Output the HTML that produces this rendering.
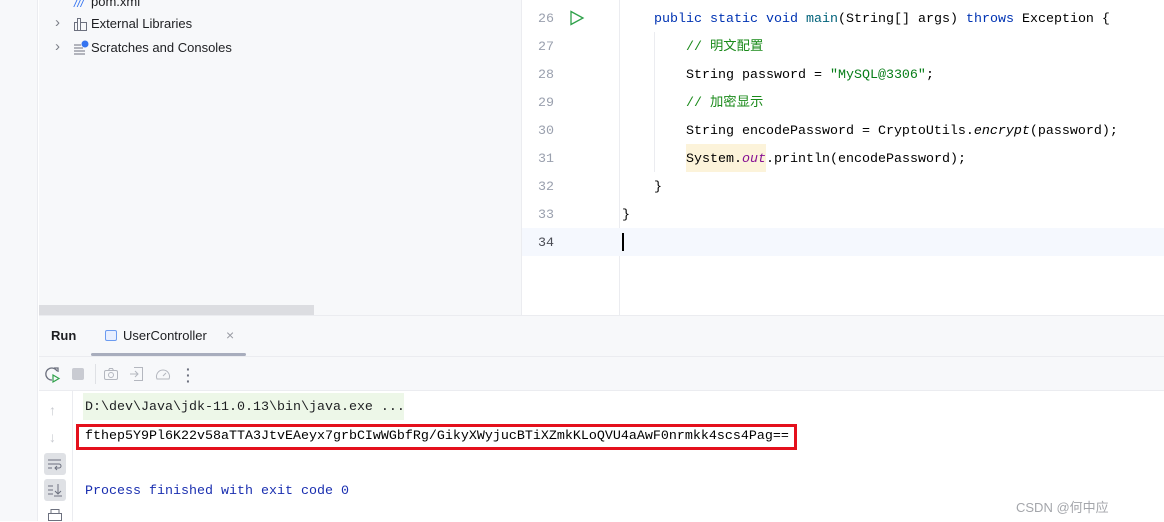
<!DOCTYPE html>
<html><head><meta charset="utf-8"><style>
*{margin:0;padding:0;box-sizing:border-box}
body{width:1164px;height:521px;overflow:hidden;background:#fff;position:relative;font-family:"Liberation Sans","Noto Sans CJK SC",sans-serif}
.a{position:absolute}
.m{font-family:"Liberation Mono","Noto Sans CJK SC",monospace;font-size:13.33px;white-space:pre}
.ln{position:absolute;left:522px;width:32px;text-align:right;color:#9aa0ae;font-family:"Liberation Mono",monospace;font-size:13.33px}
.cl{position:absolute;left:622px;height:28px;line-height:28px}
.kw{color:#0033b3}.fn{color:#00627a}.cm{color:#1a8a1a}.st{color:#067d17}.pu{color:#871094;font-style:italic}
.ui{font-size:13px;color:#1e1f22}
</style></head><body>
<div class="a" style="left:0;top:0;width:38px;height:521px;background:#f7f8fa;border-right:1px solid #ebecf0"></div>
<div class="a" style="left:39px;top:0;width:483px;height:316px;background:#f7f8fa;border-right:1px solid #ebecf0"></div>
<div class="a ui" style="left:91px;top:-6px;">pom.xml</div>
<div class="a" style="left:74px;top:-4px;color:#3574f0;font-size:12px;font-style:italic">///</div>
<div class="a" style="left:55px;top:14px;color:#7c7f88;font-size:15px">›</div>
<div class="a" style="left:55px;top:38px;color:#7c7f88;font-size:15px">›</div>
<svg class="a" style="left:73px;top:16px" width="16" height="16"><path d="M1.5 14.5V6.5h3v8M4.5 14.5V2.5h3v12M7.5 14.5V6.5h6v8zM1 14.5h13" fill="none" stroke="#6c707e"/></svg>
<div class="a ui" style="left:91px;top:16px">External Libraries</div>
<svg class="a" style="left:73px;top:40px" width="16" height="16"><path d="M1 5h7M1 8h9M1 11h11M1 14h11" stroke="#6c707e"/><circle cx="12" cy="4" r="3.5" fill="#3574f0"/></svg>
<div class="a ui" style="left:91px;top:40px">Scratches and Consoles</div>
<div class="a" style="left:39px;top:305px;width:275px;height:10px;background:#dcdde1"></div>
<div class="a" style="left:619px;top:0;width:1px;height:316px;background:#ebecf0"></div>
<div class="a" style="left:522px;top:228px;width:642px;height:28px;background:#f5f8fe"></div>
<div class="a" style="left:654px;top:32px;width:1px;height:140px;background:#ebecf0"></div>
<svg class="a" style="left:569px;top:10px" width="16" height="16"><path d="M2 1.5L14 8 2 14.5Z" fill="none" stroke="#2fa14a" stroke-width="1.3"/></svg>
<div class="ln" style="top:12px">26</div><div class="ln" style="top:40px">27</div><div class="ln" style="top:68px">28</div><div class="ln" style="top:96px">29</div><div class="ln" style="top:124px">30</div><div class="ln" style="top:152px">31</div><div class="ln" style="top:180px">32</div><div class="ln" style="top:208px">33</div><div class="ln" style="top:236px;color:#4b4d55">34</div>
<div class="a" style="left:686px;top:144px;width:80px;height:28px;background:#fcf3da"></div>
<div class="cl m" style="top:6px">    <span class="kw">public static void</span> <span class="fn">main</span>(String[] args) <span class="kw">throws</span> Exception {</div>
<div class="cl m cm" style="top:34px">        // 明文配置</div>
<div class="cl m" style="top:62px">        String password = <span class="st">"MySQL@3306"</span>;</div>
<div class="cl m cm" style="top:90px">        // 加密显示</div>
<div class="cl m" style="top:118px">        String encodePassword = CryptoUtils.<i>encrypt</i>(password);</div>
<div class="cl m" style="top:146px">        System.<span class="pu">out</span>.println(encodePassword);</div>
<div class="cl m" style="top:174px">    }</div>
<div class="cl m" style="top:202px">}</div>
<div class="a" style="left:622px;top:233px;width:2px;height:18px;background:#000"></div>
<div class="a" style="left:39px;top:315px;width:1125px;height:76px;background:#f7f8fa;border-top:1px solid #ebecf0;border-bottom:1px solid #ebecf0"></div>
<div class="a" style="left:39px;top:356px;width:1125px;height:1px;background:#ebecf0"></div>
<div class="a" style="left:51px;top:328px;font-size:13px;font-weight:bold;color:#1e1f22">Run</div>
<div class="a" style="left:105px;top:330px;width:12px;height:11px;border:1px solid #6c9bf0;border-radius:2px;background:#e8efff"></div>
<div class="a ui" style="left:123px;top:328px">UserController</div>
<div class="a" style="left:226px;top:327px;color:#9a9ca4;font-size:14px">×</div>
<div class="a" style="left:91px;top:353px;width:155px;height:3px;background:#a8adbd;border-radius:2px"></div>
<svg class="a" style="left:44px;top:366px" width="18" height="18"><path d="M13 5A6 6 0 1 0 8 14" fill="none" stroke="#6c707e" stroke-width="1.3"/><path d="M10 2h4v4" fill="none" stroke="#6c707e" stroke-width="1.3"/><path d="M9 9l6 3.5-6 3.5z" fill="none" stroke="#2fa14a" stroke-width="1.2"/></svg>
<div class="a" style="left:72px;top:368px;width:12px;height:12px;background:#c9cbd2;border-radius:2px"></div>
<div class="a" style="left:95px;top:364px;width:1px;height:20px;background:#dfe1e5"></div>
<svg class="a" style="left:103px;top:366px" width="16" height="16"><rect x="1.5" y="4.5" width="13" height="9" rx="1.5" fill="none" stroke="#b4b7bf"/><circle cx="8" cy="9" r="2.5" fill="none" stroke="#b4b7bf"/><path d="M5.5 4.5l1-2h3l1 2" fill="none" stroke="#b4b7bf"/></svg>
<svg class="a" style="left:129px;top:366px" width="16" height="16"><path d="M5 1.5h8.5v13H5M1 8h8M6 5l3 3-3 3" fill="none" stroke="#b4b7bf"/></svg>
<svg class="a" style="left:155px;top:366px" width="18" height="16"><path d="M2 13A6.5 6.5 0 1 1 14 13z" fill="none" stroke="#b4b7bf"/><path d="M8 10l3-3" stroke="#b4b7bf"/></svg>
<div class="a" style="left:186px;top:366px;color:#6c707e;font-size:14px;font-weight:bold;line-height:6px">·<br>·<br>·</div>
<div class="a" style="left:72px;top:391px;width:1px;height:130px;background:#ebecf0"></div>
<div class="a" style="left:49px;top:402px;color:#c8cad0;font-size:14px">↑</div>
<div class="a" style="left:49px;top:429px;color:#c8cad0;font-size:14px">↓</div>
<div class="a" style="left:44px;top:453px;width:22px;height:22px;background:#dfe1e5;border-radius:3px"></div>
<svg class="a" style="left:47px;top:456px" width="16" height="16"><path d="M1 4h13M1 8h11a2 2 0 0 1 0 4H8M1 12h4M10 10l-2 2 2 2" fill="none" stroke="#6c707e"/></svg>
<div class="a" style="left:44px;top:479px;width:22px;height:22px;background:#dfe1e5;border-radius:3px"></div>
<svg class="a" style="left:47px;top:482px" width="16" height="16"><path d="M1 4h5M1 8h5M1 12h5M11 2v10M8 9l3 3 3-3M7 14h8" fill="none" stroke="#6c707e"/></svg>
<svg class="a" style="left:47px;top:508px" width="16" height="14"><rect x="4" y="1.5" width="8" height="4" fill="none" stroke="#6c707e"/><rect x="1.5" y="5.5" width="13" height="7" fill="none" stroke="#6c707e"/></svg>
<div class="a" style="left:83px;top:393px;width:321px;height:27px;background:#edf7e8"></div>
<div class="a m" style="left:85px;top:400px;color:#1e1f22">D:\dev\Java\jdk-11.0.13\bin\java.exe ...</div>
<div class="a" style="left:76px;top:424px;width:721px;height:26px;border:3px solid #e4101c"></div>
<div class="a m" style="left:85px;top:429px;color:#000">fthep5Y9Pl6K22v58aTTA3JtvEAeyx7grbCIwWGbfRg/GikyXWyjucBTiXZmkKLoQVU4aAwF0nrmkk4scs4Pag==</div>
<div class="a m" style="left:85px;top:484px;color:#1a2fb0">Process finished with exit code 0</div>
<div class="a" style="left:1016px;top:497px;font-size:13px;color:#a4a6ab">CSDN @何中应</div>
</body></html>
